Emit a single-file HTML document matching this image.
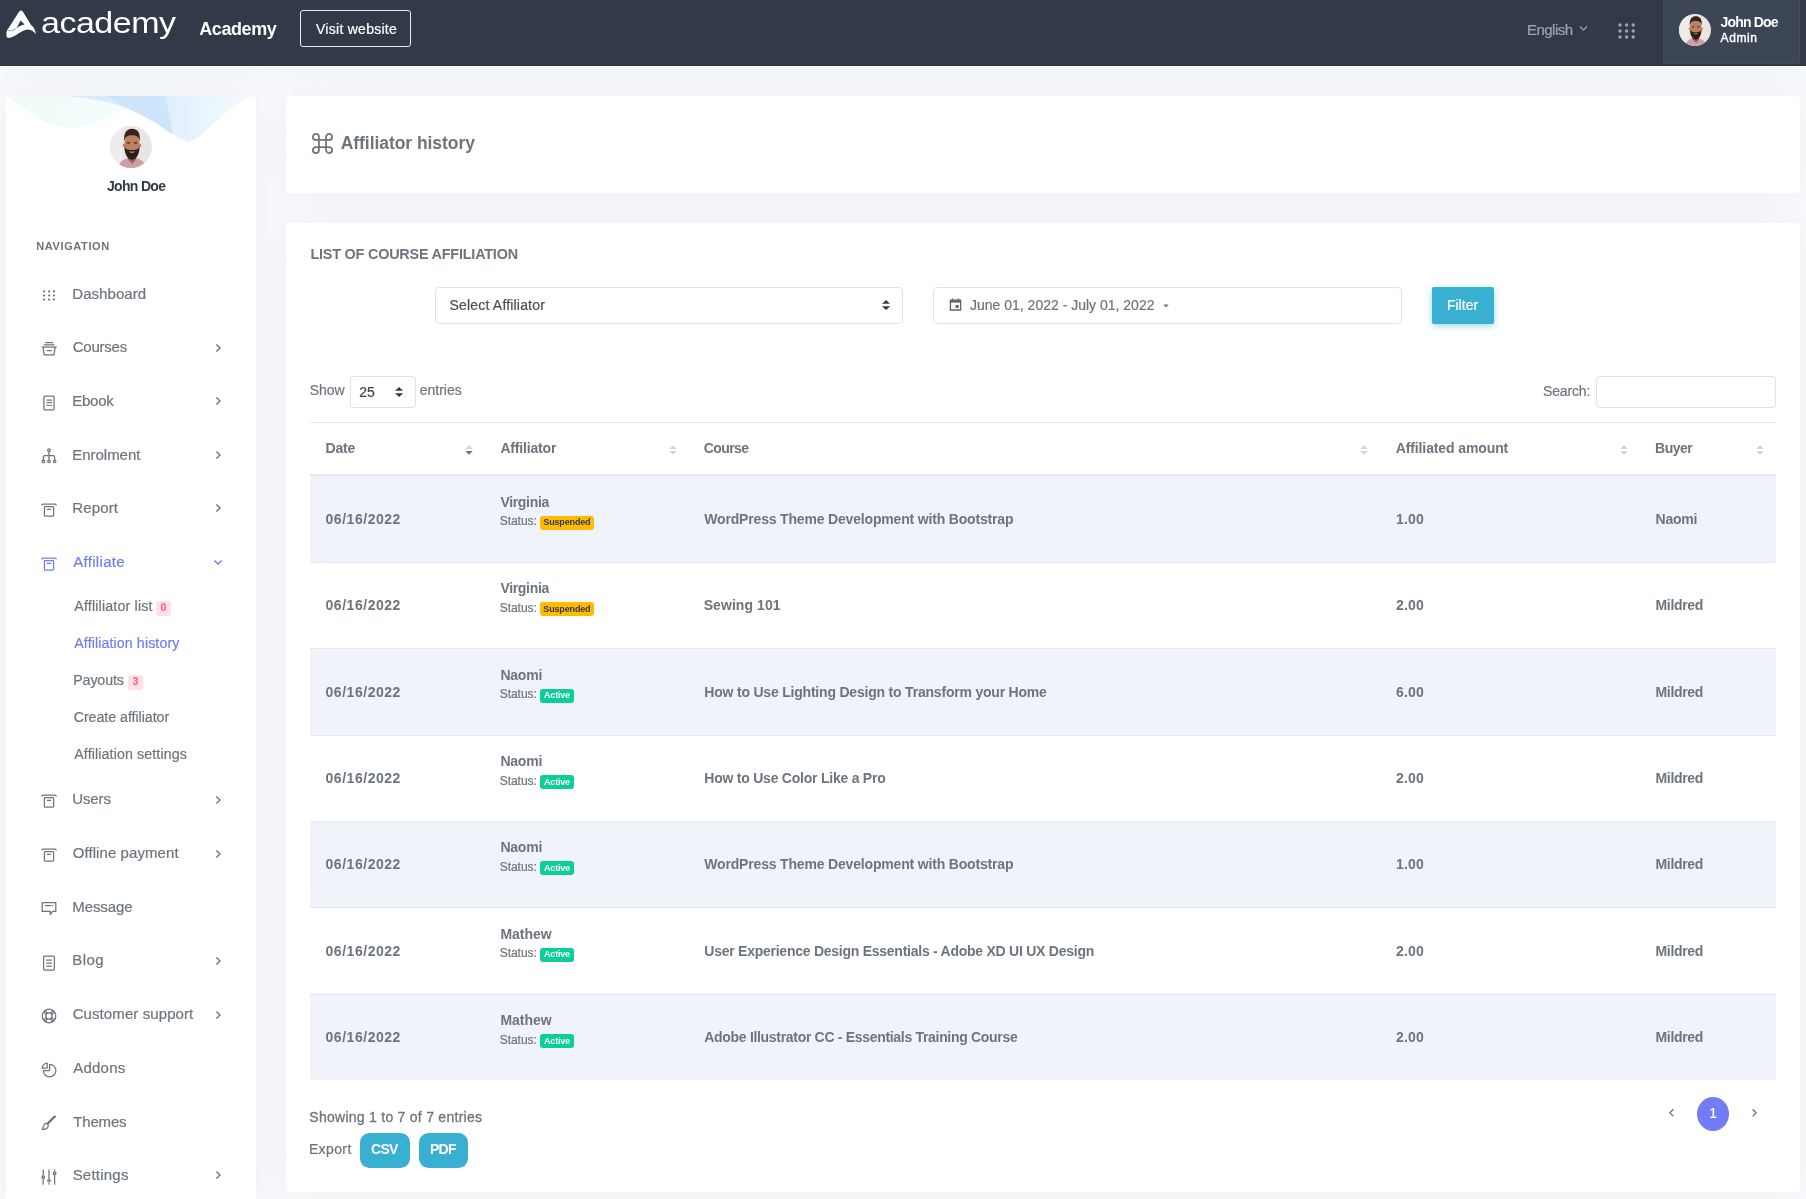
<!DOCTYPE html>
<html lang="en">
<head>
<meta charset="utf-8">
<title>Affiliator history | Academy</title>
<style>
*{box-sizing:border-box;margin:0;padding:0}
html,body{width:1806px;height:1199px;overflow:hidden}
body{background:#fafbfe;font-family:"Liberation Sans",sans-serif;color:#6c757d;position:relative}
.abs{position:absolute;white-space:nowrap}
.t{position:absolute;white-space:nowrap;line-height:20px;height:20px;color:#6c757d}
#hdr{position:absolute;left:0;top:0;width:1806px;height:66px;border-bottom:1px solid #2b3440;background:#313a46;box-shadow:0 1px 0 #fff,0 0 35px rgba(154,161,171,.15);will-change:transform;z-index:3}
#visit{position:absolute;left:300px;top:10px;width:111px;height:37px;border:1px solid #e6ebf1;border-radius:3px}
#userbox{position:absolute;left:1663px;top:0;width:137px;height:64px;background:#3c4655;border:1px solid #414d5d;border-top:none}
#side{position:absolute;left:6px;top:96px;width:250px;height:1110px;background:#fff;box-shadow:0 0 35px rgba(154,161,171,.15);overflow:hidden;will-change:transform;z-index:2}
.bdg{position:absolute;background:#fde1e7;border-radius:3px;width:15px;height:15px}
.card{position:absolute;background:#fff;border-radius:4px;box-shadow:0 0 35px rgba(154,161,171,.15);will-change:transform}
.inp{position:absolute;border:1px solid #dee2e6;border-radius:4px;background:#fff}
.btn{position:absolute;background:#39afd1}
.b{position:absolute;border-radius:3px;height:14px}
.b.w{background:#ffbc00}
.b.g{background:#0acf97}
</style>
</head>
<body>
<div id="hdr">
<svg class="abs" style="left:0;top:0" width="44" height="50" viewBox="0 0 44 50"><path d="M19.2 11.6 Q21 9.4 22.8 11.6 L31.2 25.2 C33.5 26.5 35.3 29.5 36 34.6 C34.2 31.5 31.5 29.6 28 29.4 C23.5 29.3 19 33.4 13.3 36.6 C10.5 38 8.3 38.2 7.2 37.4 C6 36.4 6.2 33 7 30.6 Z" fill="#fff"/><path d="M20.6 20.6 L24.6 24.6 C21.8 25 19.2 26.4 16.6 28 Z" fill="#313a46"/><path d="M8 30.2 C10 31.5 13 31 16.6 28" fill="none" stroke="#313a46" stroke-width=".5"/></svg>
<div class="t" style="left:41.00px;top:11.42px;font-size:34px;color:#fff;letter-spacing:-0.493px;transform:scaleY(.885);transform-origin:0 21.78px;">academy</div>
<div class="t" style="left:199.30px;top:19.06px;font-size:18px;font-weight:700;color:#fff;letter-spacing:-0.439px;">Academy</div>
<div id="visit"></div>
<div class="t" style="left:316.00px;top:18.55px;font-size:14px;-webkit-text-stroke:.2px;color:#fff;letter-spacing:0.269px;">Visit website</div>
<div class="t" style="left:1527.00px;top:20.10px;font-size:15px;-webkit-text-stroke:.2px;color:#98a6ad;letter-spacing:-0.526px;">English</div>
<svg class="abs" style="left:1579px;top:25px" width="9" height="7" viewBox="0 0 9 7"><path d="M1 1.5 L4.5 5 L8 1.5" fill="none" stroke="#98a6ad" stroke-width="1.2"/></svg>
<svg class="abs" style="left:1618px;top:23px" width="18" height="16" viewBox="0 0 18 16" fill="#98a6ad"><circle cx="2.0" cy="2" r="1.7"/><circle cx="2.0" cy="8" r="1.7"/><circle cx="2.0" cy="14" r="1.7"/><circle cx="8.6" cy="2" r="1.7"/><circle cx="8.6" cy="8" r="1.7"/><circle cx="8.6" cy="14" r="1.7"/><circle cx="15.2" cy="2" r="1.7"/><circle cx="15.2" cy="8" r="1.7"/><circle cx="15.2" cy="14" r="1.7"/></svg>
<div id="userbox"><div class="abs" style="left:15px;top:14px;width:32px;height:32px"><svg width="32" height="32" viewBox="0 0 42 42"><defs><clipPath id="cpH"><circle cx="21" cy="21" r="21"/></clipPath></defs><g clip-path="url(#cpH)"><rect width="42" height="42" fill="#ebe5e2"/><rect width="12.5" height="42" fill="#f0eceb"/><path d="M7.5 42C9.500 35 15 31.500 22 31.500C29 31.500 34.500 35 36.500 42Z" fill="#c9a0ac"/><path d="M18 29H26V33.500L22.500 38L18 33.500Z" fill="#a0664a"/><circle cx="14.300" cy="19.300" r="1.500" fill="#b87858"/><circle cx="29.700" cy="19.300" r="1.500" fill="#b87858"/><ellipse cx="22" cy="18.500" rx="7.700" ry="10.500" fill="#c08060"/><path d="M14.300 15.500C13.200 6 17.500 2.800 22 2.800C27 2.800 30.800 6 29.700 15.500C28.700 10.800 26.500 9.200 22 9.200C17.500 9.200 15.300 10.800 14.300 15.500Z" fill="#35231d"/><path d="M14.400 19.500C14.200 28.500 18 33.800 22 33.800C26 33.800 29.800 28.500 29.600 19.500C28.800 23.200 27.200 24 22 24C16.800 24 15.200 23.200 14.400 19.500Z" fill="#2f1f1b"/><path d="M19 25.400Q22 27.800 25 25.400Q22 26.300 19 25.400Z" fill="#f4eeea"/><path d="M16.800 16.800H20M24 16.800H27.200" stroke="#3a2620" stroke-width="1.200"/></g></svg></div></div>
<div class="t" style="left:1720.40px;top:11.65px;font-size:14px;font-weight:700;color:#fff;letter-spacing:-0.799px;">John Doe</div>
<div class="t" style="left:1720.60px;top:28.14px;font-size:12px;color:#fff;letter-spacing:0.590px;-webkit-text-stroke:.4px;">Admin</div>
</div>
<div id="side">
<svg class="abs" style="left:0;top:0" width="250" height="70" viewBox="0 0 250 70"><defs><linearGradient id="wg" x1="0" y1="0" x2="1" y2="0"><stop offset="0" stop-color="#e4faf3"/><stop offset="1" stop-color="#eef9fd"/></linearGradient><linearGradient id="wb" x1="0" y1="0" x2="1" y2="0"><stop offset="0" stop-color="#d3e8fb"/><stop offset=".5" stop-color="#d9ebfc"/><stop offset="1" stop-color="#f1fafe"/></linearGradient></defs><path d="M0 0H250V3L243.600 0Z" fill="#f3fbfe" opacity=".8"/><path d="M0 0C2.3 1.6 9.2 6.5 13.8 9.7C18.4 12.9 23.1 16.5 27.7 19.4C32.3 22.3 36.9 25.1 41.5 27C46.1 28.9 51.2 30.2 55.4 31.1C59.5 32.0 62.7 32.2 66.4 32.1C70.1 32.0 73.6 31.6 77.5 30.5C81.4 29.4 85.6 27.5 90 25.6C94.4 23.8 98.5 21.6 103.8 19.4C109.1 17.2 118.8 13.7 121.8 12.5L121.8 0L0 0Z" fill="url(#wg)" opacity=".6"/><path d="M243.6 0C242.2 0.9 239.0 3.0 235.3 5.5C231.6 8.0 226.1 11.5 221.5 15.2C216.9 18.9 212.2 23.5 207.6 27.7C203.0 31.9 197.7 37.1 193.8 40.1C189.9 43.1 186.3 44.9 184 45.7C181.7 46.5 183.0 46.4 180 45C177.0 43.6 170.7 40.2 166.1 37.4C161.5 34.6 156.9 31.2 152.3 28.4C147.7 25.6 143.5 23.4 138.4 20.8C133.3 18.2 127.4 14.8 121.8 12.5C116.2 10.2 111.1 8.6 105 7C98.9 5.4 92.2 4.2 85 3C77.8 1.8 65.8 0.5 62 0Z" fill="url(#wb)" opacity=".85"/><path d="M159.2 0C159.9 3.0 162.2 11.8 163.3 18C164.5 24.2 167.9 35.7 166.1 37.4C164.3 39.1 156.9 31.2 152.3 28.4C147.7 25.6 143.5 23.4 138.4 20.8C133.3 18.2 126.5 15.0 121.8 12.5C117.1 10.0 113.2 8.1 110 6C106.8 3.9 103.7 1.0 102.4 0Z" fill="#c3ddf9" opacity=".6"/><path d="M196 38L228 10" stroke="#fff" stroke-width="1" opacity=".7"/></svg>
<div class="abs" style="left:102px;top:28px;width:46px;height:46px;border-radius:50%;background:#fff;padding:2px"><div style="width:42px;height:42px"><svg width="42" height="42" viewBox="0 0 42 42"><defs><clipPath id="cpS"><circle cx="21" cy="21" r="21"/></clipPath></defs><g clip-path="url(#cpS)"><rect width="42" height="42" fill="#ebe5e2"/><rect width="12.5" height="42" fill="#f0eceb"/><path d="M7.5 42C9.500 35 15 31.500 22 31.500C29 31.500 34.500 35 36.500 42Z" fill="#c9a0ac"/><path d="M18 29H26V33.500L22.500 38L18 33.500Z" fill="#a0664a"/><circle cx="14.300" cy="19.300" r="1.500" fill="#b87858"/><circle cx="29.700" cy="19.300" r="1.500" fill="#b87858"/><ellipse cx="22" cy="18.500" rx="7.700" ry="10.500" fill="#c08060"/><path d="M14.300 15.500C13.200 6 17.500 2.800 22 2.800C27 2.800 30.800 6 29.700 15.500C28.700 10.800 26.500 9.200 22 9.200C17.500 9.200 15.300 10.800 14.300 15.500Z" fill="#35231d"/><path d="M14.400 19.500C14.200 28.500 18 33.800 22 33.800C26 33.800 29.800 28.500 29.600 19.500C28.800 23.200 27.200 24 22 24C16.800 24 15.200 23.200 14.400 19.500Z" fill="#2f1f1b"/><path d="M19 25.400Q22 27.800 25 25.400Q22 26.300 19 25.400Z" fill="#f4eeea"/><path d="M16.800 16.800H20M24 16.800H27.200" stroke="#3a2620" stroke-width="1.200"/></g></svg></div></div>
<div class="t" style="left:101.00px;top:79.90px;font-size:14px;font-weight:700;color:#313a46;letter-spacing:-0.678px;">John Doe</div>
<div class="t" style="left:30.25px;top:140.19px;font-size:11px;font-weight:700;letter-spacing:0.613px;">NAVIGATION</div>
<svg class="abs" style="left:35px;top:192.2px" width="16" height="16" viewBox="0 0 16 16"><circle cx="3.10" cy="3.40" r="1.1" fill="#6c757d"/><circle cx="3.10" cy="7.50" r="1.1" fill="#6c757d"/><circle cx="3.10" cy="11.60" r="1.1" fill="#6c757d"/><circle cx="8.05" cy="3.40" r="1.1" fill="#6c757d"/><circle cx="8.05" cy="7.50" r="1.1" fill="#6c757d"/><circle cx="8.05" cy="11.60" r="1.1" fill="#6c757d"/><circle cx="13.00" cy="3.40" r="1.1" fill="#6c757d"/><circle cx="13.00" cy="7.50" r="1.1" fill="#6c757d"/><circle cx="13.00" cy="11.60" r="1.1" fill="#6c757d"/></svg>
<div class="t" style="left:66.25px;top:187.80px;font-size:15px;-webkit-text-stroke:.2px;letter-spacing:0.058px;">Dashboard</div>
<svg class="abs" style="left:35px;top:245.1px" width="16" height="16" viewBox="0 0 16 16"><path d="M4.7 1.6H11.7M3.1 3.9H13.1M0.9 6.1H15.3M2.1 6.3L3.2 13.9H13L14.1 6.3M6 9.6H10.2" fill="none" stroke="#6c757d" stroke-width="1.25" stroke-linecap="round" stroke-linejoin="round"/></svg>
<div class="t" style="left:66.65px;top:241.30px;font-size:15px;-webkit-text-stroke:.2px;letter-spacing:-0.209px;">Courses</div>
<svg class="abs" style="left:206.5px;top:246.8px" width="10" height="10" viewBox="0 0 10 10"><path d="M3.4 1.4L7 5L3.4 8.6" fill="none" stroke="#6c757d" stroke-width="1.4"/></svg>
<svg class="abs" style="left:35px;top:299.0px" width="16" height="16" viewBox="0 0 16 16"><rect x="2.9" y="1.2" width="10.2" height="13.6" rx="1" fill="none" stroke="#6c757d" stroke-width="1.25" stroke-linecap="round" stroke-linejoin="round"/><path d="M6 5H10.5M6 7.7H10.5M6 10.4H8M9.8 10.4H10.5" fill="none" stroke="#6c757d" stroke-width="1.25" stroke-linecap="round" stroke-linejoin="round" stroke-width="1.1"/></svg>
<div class="t" style="left:66.25px;top:294.55px;font-size:15px;-webkit-text-stroke:.2px;letter-spacing:-0.258px;">Ebook</div>
<svg class="abs" style="left:206.5px;top:300.1px" width="10" height="10" viewBox="0 0 10 10"><path d="M3.4 1.4L7 5L3.4 8.6" fill="none" stroke="#6c757d" stroke-width="1.4"/></svg>
<svg class="abs" style="left:35px;top:352.2px" width="16" height="16" viewBox="0 0 16 16"><circle cx="8" cy="2.2" r="1.3" fill="none" stroke="#6c757d" stroke-width="1.25" stroke-linecap="round" stroke-linejoin="round" stroke-width="1"/><circle cx="2.4" cy="13.3" r="1.3" fill="none" stroke="#6c757d" stroke-width="1.25" stroke-linecap="round" stroke-linejoin="round" stroke-width="1"/><circle cx="8" cy="13.3" r="1.3" fill="none" stroke="#6c757d" stroke-width="1.25" stroke-linecap="round" stroke-linejoin="round" stroke-width="1"/><circle cx="13.6" cy="13.3" r="1.3" fill="none" stroke="#6c757d" stroke-width="1.25" stroke-linecap="round" stroke-linejoin="round" stroke-width="1"/><path d="M8 3.5V12M2.4 12V8.8Q2.4 7.5 3.7 7.5H12.3Q13.6 7.5 13.6 8.8V12" fill="none" stroke="#6c757d" stroke-width="1.25" stroke-linecap="round" stroke-linejoin="round"/></svg>
<div class="t" style="left:66.25px;top:348.55px;font-size:15px;-webkit-text-stroke:.2px;letter-spacing:-0.025px;">Enrolment</div>
<svg class="abs" style="left:206.5px;top:354.1px" width="10" height="10" viewBox="0 0 10 10"><path d="M3.4 1.4L7 5L3.4 8.6" fill="none" stroke="#6c757d" stroke-width="1.4"/></svg>
<svg class="abs" style="left:35px;top:406.0px" width="16" height="16" viewBox="0 0 16 16"><path d="M0.9 3.1Q0.9 2.2 1.8 2.2H14.2Q15.1 2.2 15.1 3.1" fill="none" stroke="#6c757d" stroke-width="1.25" stroke-linecap="round" stroke-linejoin="round"/><rect x="3.4" y="4.6" width="9.2" height="9.4" rx=".8" fill="none" stroke="#6c757d" stroke-width="1.25" stroke-linecap="round" stroke-linejoin="round"/><path d="M6.4 7.3H9.6" fill="none" stroke="#6c757d" stroke-width="1.25" stroke-linecap="round" stroke-linejoin="round" stroke-width="1.5"/></svg>
<div class="t" style="left:66.25px;top:401.80px;font-size:15px;-webkit-text-stroke:.2px;letter-spacing:0.129px;">Report</div>
<svg class="abs" style="left:206.5px;top:407.3px" width="10" height="10" viewBox="0 0 10 10"><path d="M3.4 1.4L7 5L3.4 8.6" fill="none" stroke="#6c757d" stroke-width="1.4"/></svg>
<svg class="abs" style="left:35px;top:460.0px" width="16" height="16" viewBox="0 0 16 16"><path d="M0.9 3.1Q0.9 2.2 1.8 2.2H14.2Q15.1 2.2 15.1 3.1" fill="none" stroke="#727cf5" stroke-width="1.25" stroke-linecap="round" stroke-linejoin="round"/><rect x="3.4" y="4.6" width="9.2" height="9.4" rx=".8" fill="none" stroke="#727cf5" stroke-width="1.25" stroke-linecap="round" stroke-linejoin="round"/><path d="M6.4 7.3H9.6" fill="none" stroke="#727cf5" stroke-width="1.25" stroke-linecap="round" stroke-linejoin="round" stroke-width="1.5"/></svg>
<div class="t" style="left:67.25px;top:455.55px;font-size:15px;-webkit-text-stroke:.2px;color:#727cf5;letter-spacing:0.303px;">Affiliate</div>
<svg class="abs" style="left:206.5px;top:461.0px" width="10" height="10" viewBox="0 0 10 10"><path d="M1.4 3.4L5 7L8.6 3.4" fill="none" stroke="#727cf5" stroke-width="1.4"/></svg>
<svg class="abs" style="left:35px;top:697.2px" width="16" height="16" viewBox="0 0 16 16"><path d="M0.9 3.1Q0.9 2.2 1.8 2.2H14.2Q15.1 2.2 15.1 3.1" fill="none" stroke="#6c757d" stroke-width="1.25" stroke-linecap="round" stroke-linejoin="round"/><rect x="3.4" y="4.6" width="9.2" height="9.4" rx=".8" fill="none" stroke="#6c757d" stroke-width="1.25" stroke-linecap="round" stroke-linejoin="round"/><path d="M6.4 7.3H9.6" fill="none" stroke="#6c757d" stroke-width="1.25" stroke-linecap="round" stroke-linejoin="round" stroke-width="1.5"/></svg>
<div class="t" style="left:66.25px;top:693.30px;font-size:15px;-webkit-text-stroke:.2px;letter-spacing:-0.105px;">Users</div>
<svg class="abs" style="left:206.5px;top:698.8px" width="10" height="10" viewBox="0 0 10 10"><path d="M3.4 1.4L7 5L3.4 8.6" fill="none" stroke="#6c757d" stroke-width="1.4"/></svg>
<svg class="abs" style="left:35px;top:751.2px" width="16" height="16" viewBox="0 0 16 16"><path d="M0.9 3.1Q0.9 2.2 1.8 2.2H14.2Q15.1 2.2 15.1 3.1" fill="none" stroke="#6c757d" stroke-width="1.25" stroke-linecap="round" stroke-linejoin="round"/><rect x="3.4" y="4.6" width="9.2" height="9.4" rx=".8" fill="none" stroke="#6c757d" stroke-width="1.25" stroke-linecap="round" stroke-linejoin="round"/><path d="M6.4 7.3H9.6" fill="none" stroke="#6c757d" stroke-width="1.25" stroke-linecap="round" stroke-linejoin="round" stroke-width="1.5"/></svg>
<div class="t" style="left:66.65px;top:747.05px;font-size:15px;-webkit-text-stroke:.2px;letter-spacing:0.088px;">Offline payment</div>
<svg class="abs" style="left:206.5px;top:752.5px" width="10" height="10" viewBox="0 0 10 10"><path d="M3.4 1.4L7 5L3.4 8.6" fill="none" stroke="#6c757d" stroke-width="1.4"/></svg>
<svg class="abs" style="left:35px;top:804.9px" width="16" height="16" viewBox="0 0 16 16"><path d="M1.2 1.6H14.8V10.4H11.6L9.3 13.6V10.4H1.2Z" fill="none" stroke="#6c757d" stroke-width="1.25" stroke-linecap="round" stroke-linejoin="round"/><path d="M4.6 4.6H9.8M11.4 4.6H11.8" fill="none" stroke="#6c757d" stroke-width="1.25" stroke-linecap="round" stroke-linejoin="round" stroke-width="1"/></svg>
<div class="t" style="left:66.25px;top:801.20px;font-size:15px;-webkit-text-stroke:.2px;letter-spacing:-0.095px;">Message</div>
<svg class="abs" style="left:35px;top:859.1px" width="16" height="16" viewBox="0 0 16 16"><rect x="2.6" y="1" width="10.8" height="14" rx="1" fill="none" stroke="#6c757d" stroke-width="1.25" stroke-linecap="round" stroke-linejoin="round"/><path d="M5.6 5H10.4M5.6 8H10.4M5.6 11H10.4" fill="none" stroke="#6c757d" stroke-width="1.25" stroke-linecap="round" stroke-linejoin="round" stroke-width="1.1"/></svg>
<div class="t" style="left:66.25px;top:854.40px;font-size:15px;-webkit-text-stroke:.2px;letter-spacing:0.423px;">Blog</div>
<svg class="abs" style="left:206.5px;top:859.9px" width="10" height="10" viewBox="0 0 10 10"><path d="M3.4 1.4L7 5L3.4 8.6" fill="none" stroke="#6c757d" stroke-width="1.4"/></svg>
<svg class="abs" style="left:35px;top:911.9px" width="16" height="16" viewBox="0 0 16 16"><circle cx="8" cy="8" r="6.8" fill="none" stroke="#6c757d" stroke-width="1.25" stroke-linecap="round" stroke-linejoin="round" stroke-width="1.35"/><circle cx="8" cy="8" r="3.1" fill="none" stroke="#6c757d" stroke-width="1.25" stroke-linecap="round" stroke-linejoin="round" stroke-width="1.2"/><path d="M11.01 9.66L13.27 11.92M9.66 11.01L11.92 13.27M6.34 11.01L4.08 13.27M4.99 9.66L2.73 11.92M4.99 6.34L2.73 4.08M6.34 4.99L4.08 2.73M9.66 4.99L11.92 2.73M11.01 6.34L13.27 4.08" fill="none" stroke="#6c757d" stroke-width="1.25" stroke-linecap="round" stroke-linejoin="round" stroke-width=".9"/></svg>
<div class="t" style="left:66.65px;top:908.40px;font-size:15px;-webkit-text-stroke:.2px;letter-spacing:0.093px;">Customer support</div>
<svg class="abs" style="left:206.5px;top:913.9px" width="10" height="10" viewBox="0 0 10 10"><path d="M3.4 1.4L7 5L3.4 8.6" fill="none" stroke="#6c757d" stroke-width="1.4"/></svg>
<svg class="abs" style="left:35px;top:966.0px" width="16" height="16" viewBox="0 0 16 16"><path d="M8.6 2.3A6.3 6.3 0 1 1 2.3 8.6H8.6Z" fill="none" stroke="#6c757d" stroke-width="1.25" stroke-linecap="round" stroke-linejoin="round"/><path d="M1.2 6.2A5 5 0 0 1 6.2 1.2V6.2Z" fill="none" stroke="#6c757d" stroke-width="1.25" stroke-linecap="round" stroke-linejoin="round"/></svg>
<div class="t" style="left:67.25px;top:961.60px;font-size:15px;-webkit-text-stroke:.2px;letter-spacing:0.215px;">Addons</div>
<svg class="abs" style="left:35px;top:1019.0px" width="16" height="16" viewBox="0 0 16 16"><path d="M14.6 1.4L7 9M13.6 0.9L6.2 8.2" fill="none" stroke="#6c757d" stroke-width="1.25" stroke-linecap="round" stroke-linejoin="round" stroke-width="1"/><path d="M4.2 8.6C5.8 8 7.6 9.6 7.2 11.4C6.6 13.6 3.6 14.8 1.2 14.4C2.6 13 2 10 4.2 8.6Z" fill="none" stroke="#6c757d" stroke-width="1.25" stroke-linecap="round" stroke-linejoin="round"/></svg>
<div class="t" style="left:67.25px;top:1015.60px;font-size:15px;-webkit-text-stroke:.2px;letter-spacing:-0.167px;">Themes</div>
<svg class="abs" style="left:35px;top:1073.0px" width="16" height="16" viewBox="0 0 16 16"><path d="M2.2 0.8V6M2.2 10.2V15.2M8 0.8V9.6M8 14V15.2M13.6 0.8V1.8M13.6 6.4V15.2" fill="none" stroke="#6c757d" stroke-width="1.25" stroke-linecap="round" stroke-linejoin="round" stroke-width="1.2"/><rect x="1.1" y="7" width="2.2" height="2.2" fill="none" stroke="#6c757d" stroke-width="1.25" stroke-linecap="round" stroke-linejoin="round" stroke-width="1"/><ellipse cx="8" cy="11.6" rx="1.3" ry="1.1" fill="none" stroke="#6c757d" stroke-width="1.25" stroke-linecap="round" stroke-linejoin="round" stroke-width="1"/><rect x="12.5" y="3.2" width="2.2" height="2.2" fill="none" stroke="#6c757d" stroke-width="1.25" stroke-linecap="round" stroke-linejoin="round" stroke-width="1"/></svg>
<div class="t" style="left:66.65px;top:1068.80px;font-size:15px;-webkit-text-stroke:.2px;letter-spacing:0.222px;">Settings</div>
<svg class="abs" style="left:206.5px;top:1074.3px" width="10" height="10" viewBox="0 0 10 10"><path d="M3.4 1.4L7 5L3.4 8.6" fill="none" stroke="#6c757d" stroke-width="1.4"/></svg>
<div class="t" style="left:68.25px;top:499.57px;font-size:14.24px;-webkit-text-stroke:.2px;letter-spacing:0.169px;">Affliliator list</div>
<div class="bdg" style="left:150px;top:505.25px"></div>
<div class="t" style="left:154.50px;top:501.06px;font-size:10.5px;font-weight:700;color:#fa5c7c;">0</div>
<div class="t" style="left:68.25px;top:536.57px;font-size:14.24px;-webkit-text-stroke:.2px;color:#727cf5;letter-spacing:0.097px;">Affiliation history</div>
<div class="t" style="left:67.25px;top:573.57px;font-size:14.24px;-webkit-text-stroke:.2px;letter-spacing:-0.136px;">Payouts</div>
<div class="bdg" style="left:122px;top:579.25px"></div>
<div class="t" style="left:126.50px;top:575.06px;font-size:10.5px;font-weight:700;color:#fa5c7c;">3</div>
<div class="t" style="left:67.65px;top:610.82px;font-size:14.24px;-webkit-text-stroke:.2px;letter-spacing:-0.042px;">Create affiliator</div>
<div class="t" style="left:68.25px;top:647.82px;font-size:14.24px;-webkit-text-stroke:.2px;letter-spacing:0.111px;">Affiliation settings</div>
</div>
<div class="card" style="left:286px;top:96px;width:1514px;height:97px">
<svg class="abs" style="left:24.80000000000001px;top:36.400000000000006px" width="23" height="23" viewBox="0 0 22 22"><path d="M7.6 7.6V4.7A2.9 2.9 0 1 0 4.7 7.6H17.3A2.9 2.9 0 1 0 14.4 4.7V17.3A2.9 2.9 0 1 0 17.3 14.4H4.7A2.9 2.9 0 1 0 7.6 17.3Z" fill="none" stroke="#6c757d" stroke-width="1.7" stroke-linejoin="round"/></svg>
<div class="t" style="left:54.70px;top:36.94px;font-size:17.5px;font-weight:700;letter-spacing:-0.054px;">Affiliator history</div>
</div>
<div class="card" style="left:286px;top:223px;width:1514px;height:969px">
<div class="t" style="left:24.40px;top:21.21px;font-size:14.4px;font-weight:700;letter-spacing:-0.200px;">LIST OF COURSE AFFILIATION</div>
<div class="inp" style="left:149px;top:64px;width:468px;height:37px"></div>
<div class="t" style="left:163.60px;top:72.35px;font-size:14px;-webkit-text-stroke:.2px;color:#495057;letter-spacing:0.178px;">Select Affiliator</div>
<svg class="abs" style="left:596.1px;top:77.1px" width="8.2" height="10" viewBox="0 0 8.2 10" fill="#323a46"><path d="M0 3.8L4.1 0L8.2 3.8Z"/><path d="M0 6.3L4.1 10L8.2 6.3Z"/></svg>
<div class="inp" style="left:647px;top:64px;width:469px;height:37px"></div>
<svg class="abs" style="left:663px;top:75px" width="13" height="13" viewBox="0 0 13 13"><path d="M1.4 2.2H11.6V12H1.4Z" fill="none" stroke="#5b646d" stroke-width="1.3"/><path d="M1.4 2.2H11.6V4.6H1.4Z" fill="#5b646d"/><path d="M3.6 0.4V2.6M9.4 0.4V2.6" stroke="#5b646d" stroke-width="1.3"/><rect x="6.6" y="7" width="3" height="3" fill="#5b646d"/></svg>
<div class="t" style="left:684.00px;top:72.05px;font-size:14px;-webkit-text-stroke:.2px;">June 01, 2022 - July 01, 2022</div>
<svg class="abs" style="left:877px;top:80.5px" width="6" height="4" viewBox="0 0 6 4"><path d="M0.3 0.4H5.7L3 3.4Z" fill="#6c757d"/></svg>
<div class="btn" style="left:1146px;top:64px;width:62px;height:37px;border-radius:2px;box-shadow:0 2px 6px rgba(57,175,209,.5)"></div>
<div class="t" style="left:1160.90px;top:72.35px;font-size:14px;-webkit-text-stroke:.2px;color:#fff;letter-spacing:0.030px;">Filter</div>
<div class="t" style="left:23.80px;top:157.15px;font-size:14px;-webkit-text-stroke:.2px;letter-spacing:-0.103px;">Show</div>
<div class="inp" style="left:64.30000000000001px;top:153px;width:65.5px;height:31.8px;border-radius:3px"></div>
<div class="t" style="left:73.30px;top:159.25px;font-size:14px;-webkit-text-stroke:.2px;color:#3c4450;letter-spacing:-0.086px;">25</div>
<svg class="abs" style="left:109.0px;top:164.0px" width="8.2" height="10" viewBox="0 0 8.2 10" fill="#323a46"><path d="M0 3.8L4.1 0L8.2 3.8Z"/><path d="M0 6.3L4.1 10L8.2 6.3Z"/></svg>
<div class="t" style="left:133.80px;top:157.15px;font-size:14px;-webkit-text-stroke:.2px;letter-spacing:-0.020px;">entries</div>
<div class="t" style="left:1257.10px;top:158.15px;font-size:14px;-webkit-text-stroke:.2px;letter-spacing:-0.176px;">Search:</div>
<div class="inp" style="left:1310.4px;top:153px;width:179.6px;height:31.5px"></div>
<div class="abs" style="left:24px;top:199px;width:1466px;height:1px;background:#e3e8ee"></div>
<div class="t" style="left:39.50px;top:215.45px;font-size:14px;font-weight:700;letter-spacing:-0.220px;">Date</div>
<svg class="abs" style="left:179.0px;top:222.39999999999998px" width="8" height="10" viewBox="0 0 8 10"><path d="M0.3 4L4 0.2L7.7 4Z" fill="#d0d5da"/><path d="M0.3 6L4 9.8L7.7 6Z" fill="#6c757d"/></svg>
<div class="t" style="left:214.40px;top:215.45px;font-size:14px;font-weight:700;letter-spacing:-0.178px;">Affiliator</div>
<svg class="abs" style="left:382.8px;top:222.39999999999998px" width="8" height="10" viewBox="0 0 8 10"><path d="M0.3 4L4 0.2L7.7 4Z" fill="#d0d5da"/><path d="M0.3 6L4 9.8L7.7 6Z" fill="#d0d5da"/></svg>
<div class="t" style="left:417.70px;top:215.45px;font-size:14px;font-weight:700;letter-spacing:-0.570px;">Course</div>
<svg class="abs" style="left:1074.2px;top:222.39999999999998px" width="8" height="10" viewBox="0 0 8 10"><path d="M0.3 4L4 0.2L7.7 4Z" fill="#d0d5da"/><path d="M0.3 6L4 9.8L7.7 6Z" fill="#d0d5da"/></svg>
<div class="t" style="left:1109.70px;top:215.45px;font-size:14px;font-weight:700;letter-spacing:-0.111px;">Affiliated amount</div>
<svg class="abs" style="left:1333.6px;top:222.39999999999998px" width="8" height="10" viewBox="0 0 8 10"><path d="M0.3 4L4 0.2L7.7 4Z" fill="#d0d5da"/><path d="M0.3 6L4 9.8L7.7 6Z" fill="#d0d5da"/></svg>
<div class="t" style="left:1369.10px;top:215.45px;font-size:14px;font-weight:700;letter-spacing:-0.509px;">Buyer</div>
<svg class="abs" style="left:1470.1px;top:222.39999999999998px" width="8" height="10" viewBox="0 0 8 10"><path d="M0.3 4L4 0.2L7.7 4Z" fill="#d0d5da"/><path d="M0.3 6L4 9.8L7.7 6Z" fill="#d0d5da"/></svg>
<div class="abs" style="left:24px;top:251px;width:1466px;height:88px;border-top:2px solid #e3e8ee;background:#f1f3fa"></div>
<div class="t" style="left:39.50px;top:285.65px;font-size:14px;font-weight:700;letter-spacing:0.535px;">06/16/2022</div>
<div class="t" style="left:214.40px;top:268.85px;font-size:14px;font-weight:700;letter-spacing:-0.315px;">Virginia</div>
<div class="t" style="left:213.70px;top:288.44px;font-size:12px;-webkit-text-stroke:.2px;letter-spacing:-0.037px;">Status:</div>
<div class="b w" style="left:253.89999999999998px;top:292.80px;width:54.2px"></div>
<div class="t" style="left:257.30px;top:289.48px;font-size:9px;font-weight:700;color:#313a46;letter-spacing:-0.151px;">Suspended</div>
<div class="t" style="left:418.30px;top:285.65px;font-size:14px;font-weight:700;letter-spacing:-0.176px;">WordPress Theme Development with Bootstrap</div>
<div class="t" style="left:1110.00px;top:285.65px;font-size:14px;font-weight:700;letter-spacing:0.213px;">1.00</div>
<div class="t" style="left:1369.50px;top:285.65px;font-size:14px;font-weight:700;letter-spacing:-0.199px;">Naomi</div>
<div class="abs" style="left:24px;top:339px;width:1466px;height:86px;border-top:1px solid #e3e8ee;background:#fff"></div>
<div class="t" style="left:39.50px;top:372.15px;font-size:14px;font-weight:700;letter-spacing:0.535px;">06/16/2022</div>
<div class="t" style="left:214.40px;top:355.35px;font-size:14px;font-weight:700;letter-spacing:-0.315px;">Virginia</div>
<div class="t" style="left:213.70px;top:374.94px;font-size:12px;-webkit-text-stroke:.2px;letter-spacing:-0.037px;">Status:</div>
<div class="b w" style="left:253.89999999999998px;top:379.30px;width:54.2px"></div>
<div class="t" style="left:257.30px;top:375.98px;font-size:9px;font-weight:700;color:#313a46;letter-spacing:-0.151px;">Suspended</div>
<div class="t" style="left:417.70px;top:372.15px;font-size:14px;font-weight:700;letter-spacing:0.070px;">Sewing 101</div>
<div class="t" style="left:1110.00px;top:372.15px;font-size:14px;font-weight:700;letter-spacing:0.213px;">2.00</div>
<div class="t" style="left:1369.50px;top:372.15px;font-size:14px;font-weight:700;letter-spacing:-0.338px;">Mildred</div>
<div class="abs" style="left:24px;top:425px;width:1466px;height:87px;border-top:1px solid #e3e8ee;background:#f1f3fa"></div>
<div class="t" style="left:39.50px;top:458.65px;font-size:14px;font-weight:700;letter-spacing:0.535px;">06/16/2022</div>
<div class="t" style="left:214.40px;top:441.85px;font-size:14px;font-weight:700;letter-spacing:-0.224px;">Naomi</div>
<div class="t" style="left:213.70px;top:461.44px;font-size:12px;-webkit-text-stroke:.2px;letter-spacing:-0.037px;">Status:</div>
<div class="b g" style="left:253.89999999999998px;top:465.80px;width:34.2px"></div>
<div class="t" style="left:258.10px;top:462.48px;font-size:9px;font-weight:700;color:#fff;letter-spacing:-0.222px;">Active</div>
<div class="t" style="left:418.30px;top:458.65px;font-size:14px;font-weight:700;letter-spacing:-0.203px;">How to Use Lighting Design to Transform your Home</div>
<div class="t" style="left:1110.00px;top:458.65px;font-size:14px;font-weight:700;letter-spacing:0.213px;">6.00</div>
<div class="t" style="left:1369.50px;top:458.65px;font-size:14px;font-weight:700;letter-spacing:-0.338px;">Mildred</div>
<div class="abs" style="left:24px;top:512px;width:1466px;height:86px;border-top:1px solid #e3e8ee;background:#fff"></div>
<div class="t" style="left:39.50px;top:545.15px;font-size:14px;font-weight:700;letter-spacing:0.535px;">06/16/2022</div>
<div class="t" style="left:214.40px;top:528.35px;font-size:14px;font-weight:700;letter-spacing:-0.224px;">Naomi</div>
<div class="t" style="left:213.70px;top:547.94px;font-size:12px;-webkit-text-stroke:.2px;letter-spacing:-0.037px;">Status:</div>
<div class="b g" style="left:253.89999999999998px;top:552.30px;width:34.2px"></div>
<div class="t" style="left:258.10px;top:548.98px;font-size:9px;font-weight:700;color:#fff;letter-spacing:-0.222px;">Active</div>
<div class="t" style="left:418.30px;top:545.15px;font-size:14px;font-weight:700;letter-spacing:-0.232px;">How to Use Color Like a Pro</div>
<div class="t" style="left:1110.00px;top:545.15px;font-size:14px;font-weight:700;letter-spacing:0.213px;">2.00</div>
<div class="t" style="left:1369.50px;top:545.15px;font-size:14px;font-weight:700;letter-spacing:-0.338px;">Mildred</div>
<div class="abs" style="left:24px;top:598px;width:1466px;height:86px;border-top:1px solid #e3e8ee;background:#f1f3fa"></div>
<div class="t" style="left:39.50px;top:631.15px;font-size:14px;font-weight:700;letter-spacing:0.535px;">06/16/2022</div>
<div class="t" style="left:214.40px;top:614.35px;font-size:14px;font-weight:700;letter-spacing:-0.224px;">Naomi</div>
<div class="t" style="left:213.70px;top:633.94px;font-size:12px;-webkit-text-stroke:.2px;letter-spacing:-0.037px;">Status:</div>
<div class="b g" style="left:253.89999999999998px;top:638.30px;width:34.2px"></div>
<div class="t" style="left:258.10px;top:634.98px;font-size:9px;font-weight:700;color:#fff;letter-spacing:-0.222px;">Active</div>
<div class="t" style="left:418.30px;top:631.15px;font-size:14px;font-weight:700;letter-spacing:-0.176px;">WordPress Theme Development with Bootstrap</div>
<div class="t" style="left:1110.00px;top:631.15px;font-size:14px;font-weight:700;letter-spacing:0.213px;">1.00</div>
<div class="t" style="left:1369.50px;top:631.15px;font-size:14px;font-weight:700;letter-spacing:-0.338px;">Mildred</div>
<div class="abs" style="left:24px;top:684px;width:1466px;height:87px;border-top:1px solid #e3e8ee;background:#fff"></div>
<div class="t" style="left:39.50px;top:717.65px;font-size:14px;font-weight:700;letter-spacing:0.535px;">06/16/2022</div>
<div class="t" style="left:214.40px;top:700.85px;font-size:14px;font-weight:700;letter-spacing:-0.010px;">Mathew</div>
<div class="t" style="left:213.70px;top:720.44px;font-size:12px;-webkit-text-stroke:.2px;letter-spacing:-0.037px;">Status:</div>
<div class="b g" style="left:253.89999999999998px;top:724.80px;width:34.2px"></div>
<div class="t" style="left:258.10px;top:721.48px;font-size:9px;font-weight:700;color:#fff;letter-spacing:-0.222px;">Active</div>
<div class="t" style="left:418.30px;top:717.65px;font-size:14px;font-weight:700;letter-spacing:-0.252px;">User Experience Design Essentials - Adobe XD UI UX Design</div>
<div class="t" style="left:1110.00px;top:717.65px;font-size:14px;font-weight:700;letter-spacing:0.213px;">2.00</div>
<div class="t" style="left:1369.50px;top:717.65px;font-size:14px;font-weight:700;letter-spacing:-0.338px;">Mildred</div>
<div class="abs" style="left:24px;top:771px;width:1466px;height:86px;border-top:1px solid #e3e8ee;background:#f1f3fa"></div>
<div class="t" style="left:39.50px;top:804.15px;font-size:14px;font-weight:700;letter-spacing:0.535px;">06/16/2022</div>
<div class="t" style="left:214.40px;top:787.35px;font-size:14px;font-weight:700;letter-spacing:-0.010px;">Mathew</div>
<div class="t" style="left:213.70px;top:806.94px;font-size:12px;-webkit-text-stroke:.2px;letter-spacing:-0.037px;">Status:</div>
<div class="b g" style="left:253.89999999999998px;top:811.30px;width:34.2px"></div>
<div class="t" style="left:258.10px;top:807.98px;font-size:9px;font-weight:700;color:#fff;letter-spacing:-0.222px;">Active</div>
<div class="t" style="left:418.30px;top:804.15px;font-size:14px;font-weight:700;letter-spacing:-0.310px;">Adobe Illustrator CC - Essentials Training Course</div>
<div class="t" style="left:1110.00px;top:804.15px;font-size:14px;font-weight:700;letter-spacing:0.213px;">2.00</div>
<div class="t" style="left:1369.50px;top:804.15px;font-size:14px;font-weight:700;letter-spacing:-0.338px;">Mildred</div>
<div class="t" style="left:23.30px;top:883.75px;font-size:14px;letter-spacing:0.266px;-webkit-text-stroke:.3px #6c757d;">Showing 1 to 7 of 7 entries</div>
<div class="t" style="left:22.90px;top:915.85px;font-size:14px;-webkit-text-stroke:.2px;letter-spacing:0.386px;">Export</div>
<div class="btn" style="left:74px;top:910px;width:50px;height:35px;border-radius:9.6px"></div>
<div class="t" style="left:85.00px;top:915.85px;font-size:14px;font-weight:700;color:#fff;letter-spacing:-0.724px;">CSV</div>
<div class="btn" style="left:133px;top:910px;width:49px;height:35px;border-radius:9.6px"></div>
<div class="t" style="left:143.90px;top:915.85px;font-size:14px;font-weight:700;color:#fff;letter-spacing:-0.724px;">PDF</div>
<svg class="abs" style="left:1382px;top:885px" width="7" height="10" viewBox="0 0 7 10"><path d="M5.4 1.2L1.8 4.8L5.4 8.4" fill="none" stroke="#6c757d" stroke-width="1.3"/></svg>
<div class="abs" style="left:1411px;top:874px;width:32px;height:34px;border-radius:50%;background:#727cf5"></div>
<div class="t" style="left:1423.30px;top:880.35px;font-size:14px;-webkit-text-stroke:.2px;color:#fff;">1</div>
<svg class="abs" style="left:1464.5px;top:885px" width="7" height="10" viewBox="0 0 7 10"><path d="M1.6 1.2L5.2 4.8L1.6 8.4" fill="none" stroke="#6c757d" stroke-width="1.3"/></svg>
</div>
</body>
</html>
